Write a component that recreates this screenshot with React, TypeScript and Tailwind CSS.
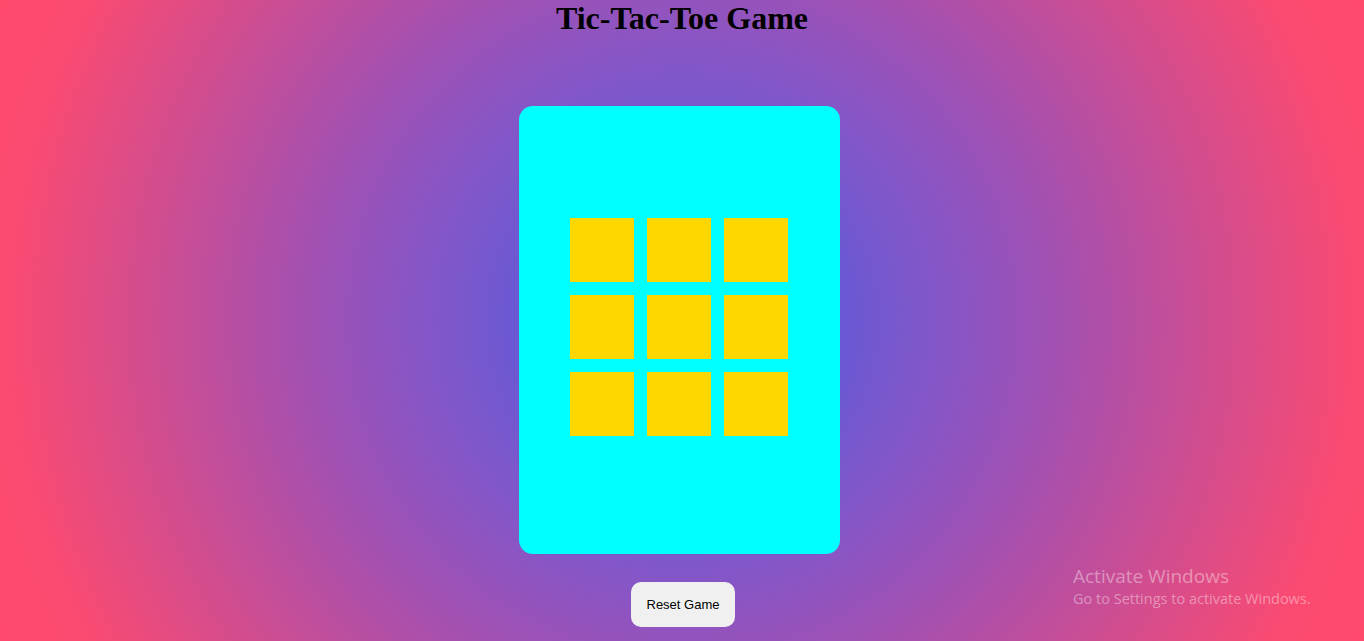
export default function App() {
  const cells = Array.from({ length: 9 }, (_, i) => i);

  return (
    <div
      className="relative min-h-screen w-full flex flex-col items-center overflow-hidden bg-[radial-gradient(circle,#6456dc_0px,#6a58d4_163px,#7a58cc_220px,#8a55c4_280px,#a450b0_382px,#fc4a70_680px,#ff4a6c_760px)]"
      style={{ fontFamily: '"Liberation Serif", serif' }}
    >
      <h1 className="text-[32px] font-bold leading-[37px] text-black">Tic-Tac-Toe Game</h1>

      {/* Board */}
      <div className="mt-[69px] mr-[6px] w-[321px] h-[448px] rounded-[14px] bg-[#00ffff] flex justify-center pt-[112px]">
        <div className="grid grid-cols-[repeat(3,64px)] auto-rows-[64px] gap-[13px] h-fit">
          {cells.map((c) => (
            <div key={c} className="w-16 h-16 bg-[#ffd700]" />
          ))}
        </div>
      </div>

      <button
        className="mt-[28px] ml-[2px] w-[104px] h-[45px] rounded-[10px] bg-[#f0f0f0] text-[13px] text-black"
        style={{ fontFamily: '"Liberation Sans", Arial, sans-serif' }}
      >
        Reset Game
      </button>

      {/* Windows watermark */}
      <div
        className="absolute left-[1073px] top-[564px] text-white/40 pointer-events-none"
        style={{ fontFamily: '"Open Sans", "Noto Sans", sans-serif' }}
      >
        <div className="text-[19px] leading-[25px]">Activate Windows</div>
        <div className="text-[14.5px] leading-[20px]">Go to Settings to activate Windows.</div>
      </div>
    </div>
  );
}
